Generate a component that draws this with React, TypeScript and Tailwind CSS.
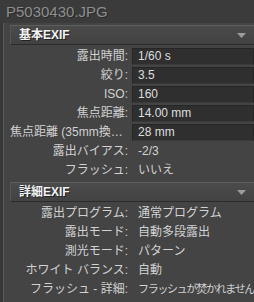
import React from 'react';

type Row = { label: string; value: string; boxed?: boolean; tight?: boolean };

const basic: Row[] = [
  { label: '露出時間:', value: '1/60 s', boxed: true },
  { label: '絞り:', value: '3.5', boxed: true },
  { label: 'ISO:', value: '160', boxed: true },
  { label: '焦点距離:', value: '14.00 mm', boxed: true },
  { label: '焦点距離 (35mm換算):', value: '28 mm', boxed: true },
  { label: '露出バイアス:', value: '-2/3' },
  { label: 'フラッシュ:', value: 'いいえ' },
];

const detail: Row[] = [
  { label: '露出プログラム:', value: '通常プログラム' },
  { label: '露出モード:', value: '自動多段露出' },
  { label: '測光モード:', value: 'パターン' },
  { label: 'ホワイト バランス:', value: '自動' },
  { label: 'フラッシュ - 詳細:', value: 'フラッシュが焚かれません', tight: true },
];

const SectionHeader = ({ title }: { title: string }) => (
  <div className="h-[20px] flex items-center justify-between border-t border-l border-t-[#5e5e5e] border-l-[#565656] border-b border-b-[#2c2c2c] bg-gradient-to-b from-[#4b4b4b] to-[#424242] pl-[8px] pr-[8px]">
    <span className="text-[12px] font-bold text-[#f2f2f2] leading-none [text-shadow:1px_1px_0_#222]">{title}</span>
    <svg width="9" height="5" viewBox="0 0 9 5">
      <polygon points="0,0 9,0 4.5,5" fill="#9c9c9c" />
    </svg>
  </div>
);

const InfoRow = ({ row }: { row: Row }) => (
  <div className="flex h-[17px] mb-[2px]">
    <div className="w-[122px] shrink-0 pr-[4px] text-right truncate text-[12px] leading-[17px] text-[#d2d2d2]">
      {row.label}
    </div>
    <div
      className={`flex-1 min-w-0 pl-[5px] leading-[15px] whitespace-nowrap overflow-hidden ${
        row.boxed
          ? 'text-[12px] bg-[#2f2f2f] border border-[#262626] border-b-[#3a3a3a] text-[#dedede]'
          : 'pt-[1px] pl-[6px] text-[#d2d2d2]'
      } ${row.tight ? 'text-[11px] tracking-[-1.3px]' : 'text-[12px]'}`}
    >
      {row.value}
    </div>
  </div>
);

export default function App() {
  return (
    <div
      className="w-[254px] h-[302px] overflow-hidden bg-[#3b3b3b] flex flex-col"
      style={{ fontFamily: '"Liberation Sans", "Noto Sans CJK JP", sans-serif' }}
    >
      {/* file name */}
      <div className="h-[23px] shrink-0 pl-[6px] pt-[4px] text-[15px] leading-[16px] text-[#8e8e8e] [text-shadow:1px_1px_0_#2a2a2a]">
        P5030430.JPG
      </div>

      <div className="flex flex-1 min-h-0">
        {/* left gutter */}
        <div className="w-[4px] shrink-0 bg-[#373737] border-r border-[#5a5a5a]" />

        <div className="flex-1 min-w-0 bg-[#444444] pl-[6px] pt-[2px]">
          <SectionHeader title="基本EXIF" />
          <div className="pt-[3px] pb-[1px]">
            {basic.map((r) => (
              <InfoRow key={r.label} row={r} />
            ))}
          </div>

          <SectionHeader title="詳細EXIF" />
          <div className="pt-[3px]">
            {detail.map((r) => (
              <InfoRow key={r.label} row={r} />
            ))}
          </div>
        </div>
      </div>
    </div>
  );
}
